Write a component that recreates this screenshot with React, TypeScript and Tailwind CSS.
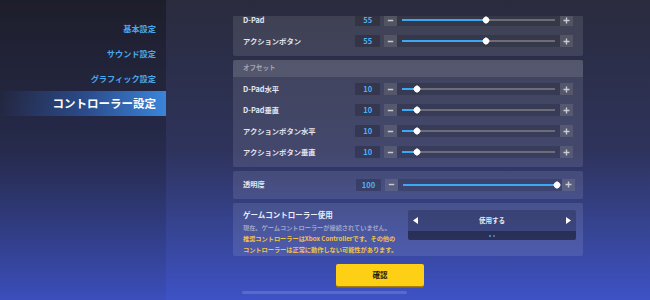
import type { ReactNode } from 'react'

type SliderRow = { label: string; value: number }

const sizeRows: SliderRow[] = [
  { label: 'D-Pad', value: 55 },
  { label: 'アクションボタン', value: 55 },
]

const offsetRows: SliderRow[] = [
  { label: 'D-Pad水平', value: 10 },
  { label: 'D-Pad垂直', value: 10 },
  { label: 'アクションボタン水平', value: 10 },
  { label: 'アクションボタン垂直', value: 10 },
]

const menu = ['基本設定', 'サウンド設定', 'グラフィック設定', 'コントローラー設定']

function Thumb() {
  return (
    <svg width="9" height="9" viewBox="0 0 9 9" className="block">
      <path d="M4.5 0.6 L8.4 4.5 L4.5 8.4 L0.6 4.5 Z" fill="#ffffff" />
      <circle cx="4.5" cy="4.5" r="3.1" fill="#ffffff" />
    </svg>
  )
}

function StepButton({ kind }: { kind: 'minus' | 'plus' }) {
  return (
    <span className="w-[13px] h-full bg-white/15 flex items-center justify-center">
      <svg width="7" height="7" viewBox="0 0 7 7">
        <path
          d={kind === 'plus' ? 'M0.5 3.5H6.5M3.5 0.5V6.5' : 'M0.8 3.5H6.2'}
          stroke="#c9cad4"
          strokeWidth="1.4"
        />
      </svg>
    </span>
  )
}

function Row({ label, value }: SliderRow) {
  return (
    <div className="h-[21px] flex items-center px-[10px]">
      <span className="w-[113px] text-[7.3px] font-bold text-[#e4e5ee] whitespace-nowrap">
        {label}
      </span>
      <span className="w-[25px] h-[12px] rounded-[1px] bg-black/20 flex items-center justify-center text-[7.5px] font-bold text-[#4fb2f3]">
        {value}
      </span>
      <div className="ml-[4px] w-[190px] h-[12px] bg-black/15 flex items-center">
        <StepButton kind="minus" />
        <div className="relative flex-1 mx-[5px] h-[2px] bg-[#6c6d79]">
          <div
            className="absolute left-0 top-0 h-full bg-[#3aa9f2]"
            style={{ width: `${value}%` }}
          />
          <div
            className="absolute top-1/2 -translate-x-1/2 -translate-y-1/2"
            style={{ left: `${value}%` }}
          >
            <Thumb />
          </div>
        </div>
        <StepButton kind="plus" />
      </div>
    </div>
  )
}

function Card({ title, children }: { title?: string; children: ReactNode }) {
  return (
    <div className="rounded-[2px] bg-white/10 overflow-hidden">
      {title && (
        <div className="h-[17px] bg-white/10 px-[10px] flex items-center text-[6.5px] font-bold text-[#a4a5b0]">
          {title}
        </div>
      )}
      <div className="pt-[2px] pb-[4px]">{children}</div>
    </div>
  )
}

export default function App() {
  return (
    <div className="w-[650px] h-[300px] overflow-hidden flex bg-linear-to-b from-[#2a2b3d] via-[#2e335c] to-[#3e52c6] font-['Noto_Sans_CJK_JP','Noto_Sans',sans-serif]">
      {/* サイドメニュー */}
      <nav className="w-[166px] h-full shrink-0 bg-linear-to-b from-black/30 to-black/5 pt-[16px] flex flex-col">
        {menu.map((m, i) =>
          i === 3 ? (
            <div
              key={m}
              className="h-[25px] flex items-center justify-end pr-[10px] bg-linear-to-r from-[#3a7fd6]/0 via-[#2f62b8]/60 to-[#3a84da] text-[11.5px] font-bold text-white"
            >
              {m}
            </div>
          ) : (
            <div
              key={m}
              className="h-[25px] flex items-center justify-end pr-[10px] text-[8.2px] font-bold text-[#4aa9ea]"
            >
              {m}
            </div>
          )
        )}
      </nav>

      <main className="flex-1 flex flex-col">
        <div className="w-[350px] mx-auto mt-[16px] h-[240px] overflow-hidden">
          <div className="-mt-[8.5px] flex flex-col gap-[4px]">
            <Card>
              {sizeRows.map((r) => (
                <Row key={r.label} {...r} />
              ))}
            </Card>

            <Card title="オフセット">
              {offsetRows.map((r) => (
                <Row key={r.label} {...r} />
              ))}
            </Card>

            <div className="h-[28px] rounded-[2px] bg-white/10 flex items-center">
              <div className="flex-1">
                <Row label="透明度" value={100} />
              </div>
            </div>

            <div className="h-[53.5px] rounded-[2px] bg-white/10 flex pl-[10px] pr-[7px] pt-[6px]">
              <div className="flex-1">
                <div className="h-[11px] leading-[11px] text-[7.5px] font-bold text-[#eceef6]">
                  ゲームコントローラー使用
                </div>
                <div className="mt-[2px] text-[6.2px] leading-[11px] font-bold whitespace-nowrap">
                  <div className="text-[#a0a4c8]">現在、ゲームコントローラーが接続されていません。</div>
                  <div className="text-[#f2c443]">推奨コントローラーはXbox Controllerです。その他の</div>
                  <div className="text-[#f2c443]">コントローラーは正常に動作しない可能性があります。</div>
                </div>
              </div>
              <div className="w-[168px] mt-[1.5px] h-[30px] self-start rounded-[2px] overflow-hidden flex flex-col">
                <div className="h-[21px] bg-black/20 flex items-center justify-between px-[5px]">
                  <svg width="5" height="7" viewBox="0 0 5 7">
                    <path d="M5 0 L0 3.5 L5 7 Z" fill="#ffffff" />
                  </svg>
                  <span className="text-[6.5px] font-bold text-[#e6e7ef]">使用する</span>
                  <svg width="5" height="7" viewBox="0 0 5 7">
                    <path d="M0 0 L5 3.5 L0 7 Z" fill="#ffffff" />
                  </svg>
                </div>
                <div className="h-[9px] bg-black/45 flex items-center justify-center gap-[2px]">
                  <span className="w-[2px] h-[2px] rounded-full bg-[#3aa9f2]" />
                  <span className="w-[2px] h-[2px] rounded-full bg-[#7a7c90]" />
                </div>
              </div>
            </div>
          </div>
        </div>

        <button
          type="button"
          className="ml-[170px] mt-[8px] w-[88px] h-[21.5px] rounded-[2px] bg-[#fdd016] shadow-[0_1.5px_0_#a67d00] flex items-center justify-center text-[7.5px] font-bold text-[#1d1a10]"
        >
          確認
        </button>
        <div className="ml-[76px] mt-[5.5px] w-[165px] h-[2.5px] rounded-full bg-white/15" />
      </main>
    </div>
  )
}
